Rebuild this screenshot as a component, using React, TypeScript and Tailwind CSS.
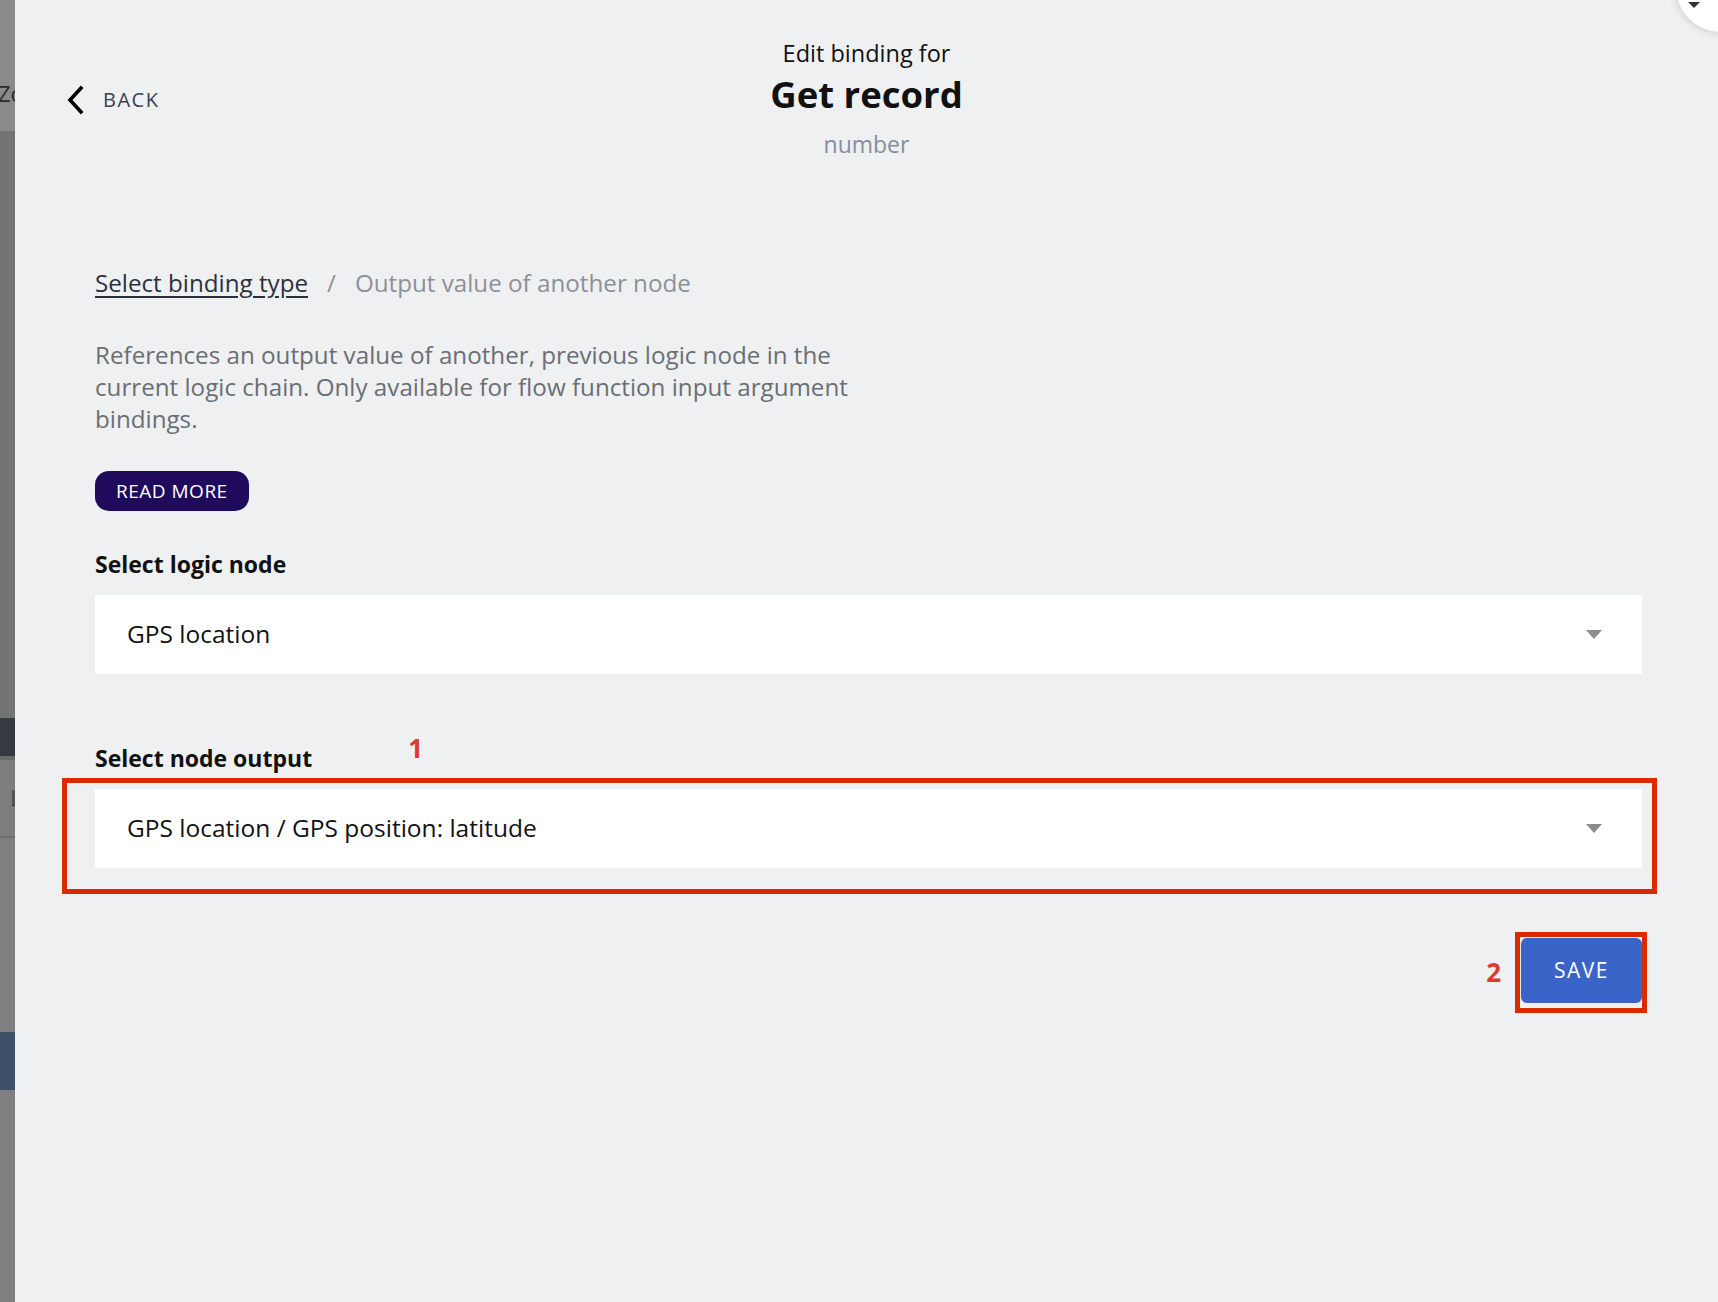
import React from "react";

const font = { fontFamily: "'Open Sans', 'Noto Sans', sans-serif" };

function ChevronLeft() {
  return (
    <svg width="20" height="30" viewBox="0 0 20 30" fill="none" className="shrink-0">
      <path d="M16 3 L5 15 L16 27" stroke="#000" strokeWidth="3.6" strokeLinecap="square" strokeLinejoin="miter" />
    </svg>
  );
}

function Caret() {
  return (
    <svg width="16" height="9" viewBox="0 0 16 9" className="shrink-0">
      <path d="M0 0 H16 L8 9 Z" fill="#8b8b90" />
    </svg>
  );
}

function SelectBox({ value }: { value: string }) {
  return (
    <div className="flex h-[79px] w-full items-center justify-between bg-white pl-[32px] pr-[40px]">
      <span className="text-[24.5px] text-[#111214]">{value}</span>
      <Caret />
    </div>
  );
}

// the page behind the drawer, only a sliver of it shows
function BackdropStrip() {
  return (
    <div className="flex w-[15px] shrink-0 flex-col overflow-hidden">
      <div className="flex h-[131px] items-end bg-[#8a8a8a] pb-[27px]">
        <span className="-ml-[2px] text-[22px] leading-none text-[#2b2b2b]">Zo</span>
      </div>
      <div className="h-[587px] bg-[#747474]" />
      <div className="h-[38px] bg-[#363940]" />
      <div className="h-[4px] bg-[#6a6a6a]" />
      <div className="flex h-[76px] items-center bg-[#7d7d7d] pl-[12px]">
        <div className="h-[16px] w-[3px] border-b border-[#333] bg-[#555]" />
      </div>
      <div className="h-[2px] bg-[#6d6d6d]" />
      <div className="h-[194px] bg-[#7f7f7f]" />
      <div className="h-[58px] bg-[#3d4f69]" />
      <div className="flex-1 bg-[#7f7f7f]" />
    </div>
  );
}

export default function App() {
  return (
    <div className="flex h-[1302px] w-[1718px] overflow-hidden" style={font}>
      <BackdropStrip />
      <div className="relative flex flex-1 flex-col bg-[#eff0f2]">
        <div className="absolute right-[-48px] top-[-58px] flex h-[90px] w-[90px] items-end justify-start rounded-full bg-white pb-[24px] pl-[12px] shadow-[0_0_10px_rgba(0,0,0,0.18)]">
          <div className="h-0 w-0 border-x-[6px] border-t-[6px] border-x-transparent border-t-[#2f3542]" />
        </div>

        <header className="grid grid-cols-[1fr_auto_1fr] items-center pt-[38px]">
          <button className="flex items-center gap-[18px] pl-[50px] pt-[2px] text-left">
            <ChevronLeft />
            <span className="text-[20px] tracking-[1.5px] text-[#3a4150]">BACK</span>
          </button>
          <div className="flex flex-col items-center">
            <div className="text-[23.5px] leading-[30px] text-[#111]">Edit binding for</div>
            <h1 className="mt-[4px] text-[36.5px] font-bold leading-[44px] text-[#111]">Get record</h1>
            <div className="mt-[13px] text-[23px] leading-[30px] text-[#858da0]">number</div>
          </div>
          <div />
        </header>

        <main className="flex flex-col pl-[80px] pr-[76px] pt-[109px]">
          <nav className="flex items-center gap-[19px] text-[24.2px] leading-[30px]">
            <a className="text-[#2c313c] underline underline-offset-[4px]">Select binding type</a>
            <span className="text-[#8d9096]">/</span>
            <span className="text-[#8d9096]">Output value of another node</span>
          </nav>

          <p className="mt-[41px] max-w-[800px] text-[24.2px] leading-[32px] text-[#6b6e74]">
            References an output value of another, previous logic node in the current logic chain. Only available for flow function input argument bindings.
          </p>

          <div className="mt-[36px]">
            <button className="h-[40px] rounded-[14px] bg-[#1f0a5c] px-[21px] text-[19px] tracking-[0.5px] text-white">
              READ MORE
            </button>
          </div>

          <label className="mt-[38px] text-[23px] font-bold leading-[30px] text-[#111]">Select logic node</label>
          <div className="mt-[16px]">
            <SelectBox value="GPS location" />
          </div>

          <div className="mt-[59px] flex items-end">
            <label className="text-[23px] font-bold leading-[30px] text-[#111]">Select node output</label>
            <span className="mb-[10px] ml-[96px] text-[26px] font-bold leading-[30px] text-[#dc3a33]">1</span>
          </div>
          <div className="-ml-[33px] -mr-[15px] mt-[5px] border-[5px] border-[#dc2a00] pb-[21px] pl-[28px] pr-[10px] pt-[6px]">
            <SelectBox value="GPS location / GPS position: latitude" />
          </div>

          <div className="mt-[38px] flex items-center justify-end gap-[14px]">
            <span className="text-[26px] font-bold text-[#dc3a33]">2</span>
            <div className="-mr-[5px] border-[5px] border-[#dc2a00] pb-[5px] pl-px pt-px">
              <button className="flex h-[65px] w-[121px] items-center justify-center rounded-[6px] bg-[#3a64c8] text-[21px] tracking-[1.5px] text-white">
                SAVE
              </button>
            </div>
          </div>
        </main>
      </div>
    </div>
  );
}
